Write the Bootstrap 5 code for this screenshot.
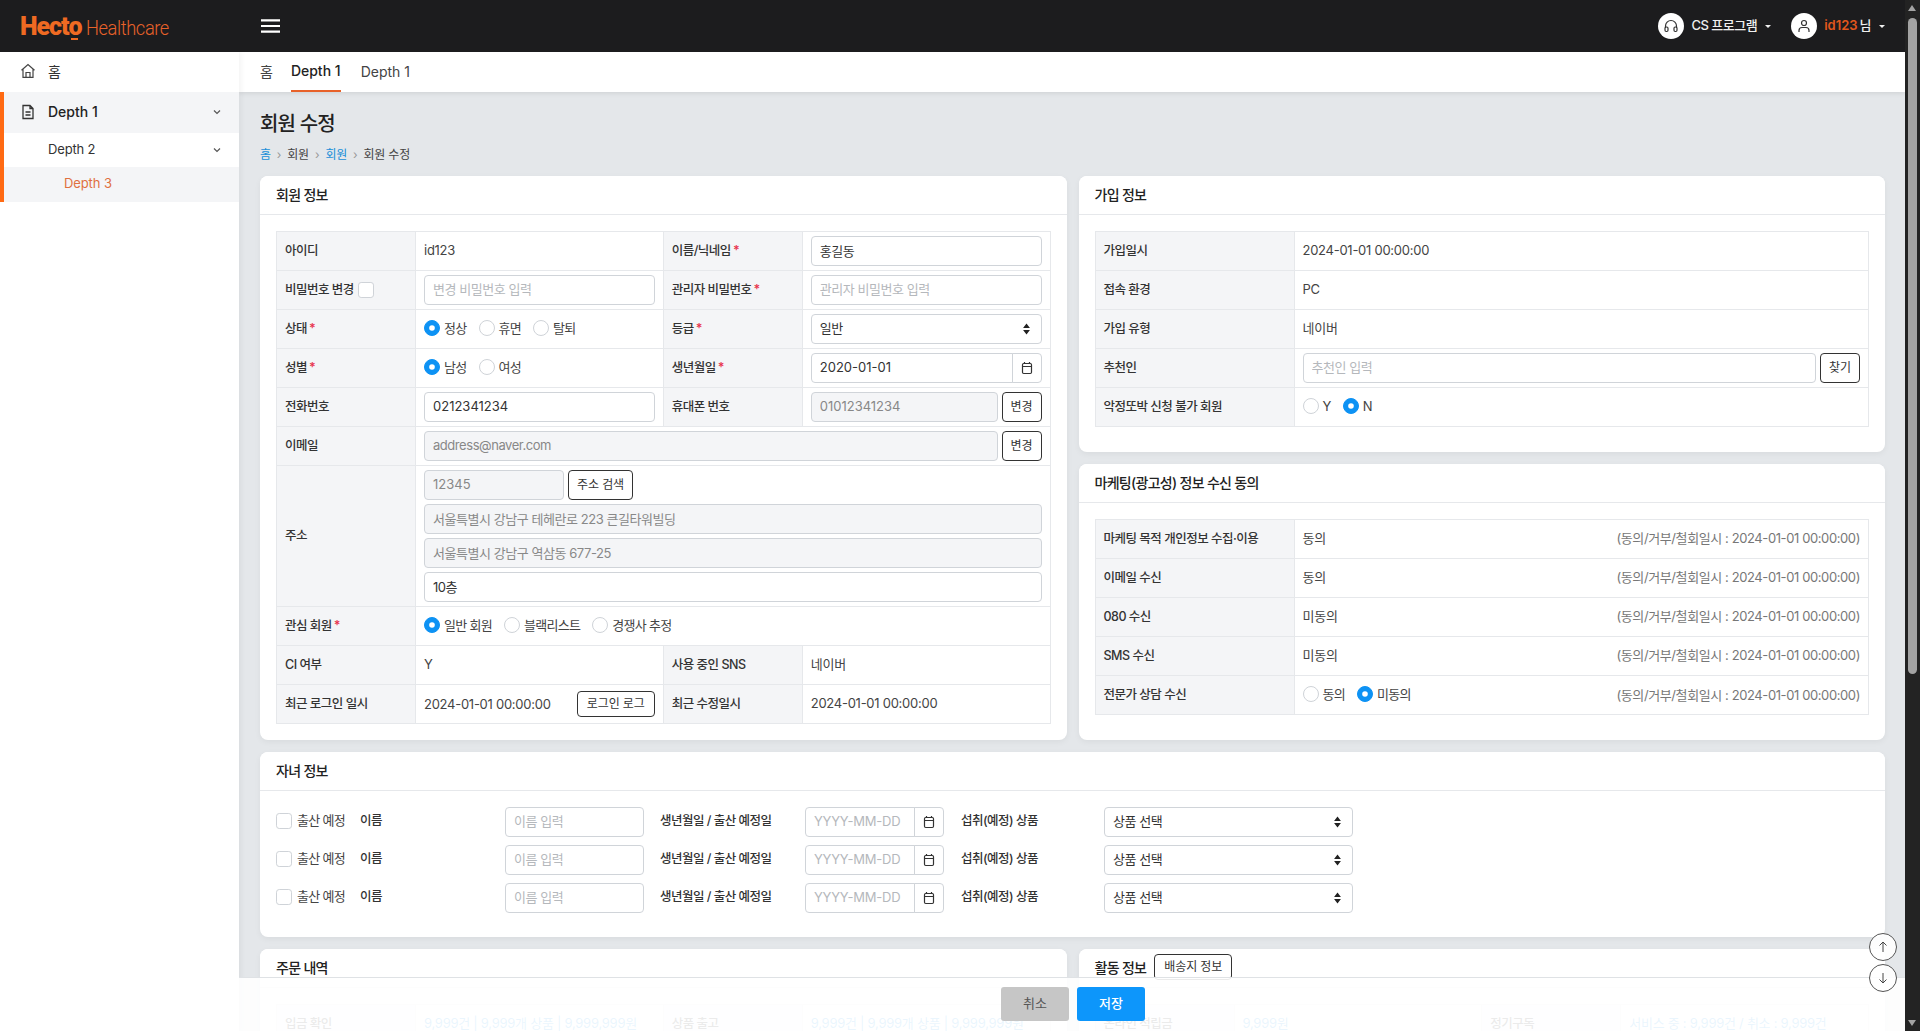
<!doctype html>
<html lang="ko">
<head>
<meta charset="utf-8">
<title>회원 수정</title>
<link rel="stylesheet" href="https://cdn.jsdelivr.net/npm/bootstrap@5.3.0/dist/css/bootstrap.min.css">
<style>
:root{--orange:#ff6a13;--txt:#333;--line:#e6e8eb;--thbg:#f4f5f7;--blue:#0d92f4}
html,body{height:100%;overflow:hidden}
body{font-family:Inter,"Noto Sans CJK KR",sans-serif;font-size:13px;color:var(--txt);background:#e4e7ea}
.app-shell{height:1031px}
.app-main{min-width:0;flex:1 1 auto}
.fake-scroll{width:15px;background:#232323;position:relative;flex:none;padding:18px 3px 0}
.fake-thumb{height:656px;background:#a3a3a3;border-radius:5px}
.fake-scroll::before,.fake-scroll::after{content:"";position:absolute;left:3px;border-left:4.5px solid transparent;border-right:4.5px solid transparent}
.fake-scroll::before{top:5px;border-bottom:6px solid #a3a3a3}
.fake-scroll::after{bottom:5px;border-top:6px solid #a3a3a3}
.top-bar{height:52px;background:#1c1c1e;flex:none;padding:0 20px 0 20px}
.brand-box{width:241px;color:#e8622a;font-family:Roboto,sans-serif;line-height:1;white-space:nowrap}
.brand-a{font-weight:900;font-size:25px;letter-spacing:-1.1px;color:#ef6a22}
.brand-o{position:relative;display:inline-block}
.brand-o::after{content:"";position:absolute;left:3px;right:3px;bottom:-1px;height:2px;background:#ef6a22}
.brand-b{display:inline-block;font-weight:300;font-size:21px;letter-spacing:-.45px;margin-left:5px;transform:scaleX(.87);transform-origin:left center}
.burger{width:19px;height:14px;display:block}
.user-chip{color:#f0f0f0;font-size:13px;font-weight:500;text-decoration:none;letter-spacing:-.5px}
.user-chip:hover{color:#f0f0f0}
.chip-ava{width:26px;height:26px;border-radius:50%;background:#fff;display:flex;align-items:center;justify-content:center;margin-right:7px}
.user-chip.dropdown-toggle::after{margin-left:8px;vertical-align:.15em;border-top-width:.28em;border-left-width:.28em;border-right-width:.28em}
.chip-id{color:#e2571c;font-weight:600;margin-right:2px;letter-spacing:0}
.chip-gap{gap:20px}
.side-bar{width:239px;flex:none;background:#fff;box-shadow:2px 0 6px rgba(0,0,0,.05);z-index:3}
.side-item{display:flex;align-items:center;padding:0 17px 2px 20px;color:#333;text-decoration:none;font-size:14px}
.side-item svg.lead-ico{margin-right:12px;flex:none}
.side-home{height:40px}
.side-d1{height:41px;background:var(--thbg);color:#222;font-weight:500}
.side-d2{height:34px;font-size:13px;letter-spacing:-.15px}
.side-d3{height:35px;background:var(--thbg);color:#e0703f;font-size:13px;letter-spacing:-.1px}
.side-group{border-left:4px solid var(--orange)}
.side-group .side-d1{padding-left:44px;position:relative}
.side-group .side-d1 svg.lead-ico{position:absolute;left:16px}
.side-group .side-d2{padding:0 17px 0 44px}
.side-group .side-d3{padding:0 17px 1px 60px}
.tab-strip{height:40px;background:#fff;box-shadow:0 1px 5px rgba(0,0,0,.1);padding-left:21px;gap:18px;z-index:2;flex:none}
.tab-link{height:40px;display:flex;align-items:center;color:#444;font-size:14px;text-decoration:none;padding-bottom:1px}
.tab-on{color:#222;font-weight:500;border-bottom:2px solid #e8622a;padding-bottom:2px}
.tab-strip .tab-second{margin-left:2px}
.work-area{position:relative;overflow:hidden;flex:1 1 auto;min-height:0}
.work-inner{padding:20px 20px 20px 21px}
.page-ttl{font-size:20px;font-weight:500;line-height:24px;margin:0;color:#222;letter-spacing:-.8px}
.crumbs{--bs-breadcrumb-margin-bottom:11px;--bs-breadcrumb-item-padding-x:6px;--bs-breadcrumb-divider-color:#999;--bs-breadcrumb-divider:'›';margin-top:9px;font-size:12px;line-height:20px;height:20px;letter-spacing:-.2px}
.crumbs a{color:#1a8fd8;text-decoration:none}
.crumbs .breadcrumb-item.active{color:#444}
.tight-row{--bs-gutter-x:12px;--bs-gutter-y:12px}
.col-gap{gap:12px}
.panel{border:0;border-radius:8px;box-shadow:0 2px 6px rgba(0,0,0,.05);--bs-card-bg:#fff}
.panel .card-header{height:39px;padding:0 16px 2px;background:#fff;border-bottom:1px solid var(--line);font-size:14px;font-weight:500;color:#222;display:flex;align-items:center;gap:8px;border-radius:8px 8px 0 0;letter-spacing:-.7px}
.panel .card-body{padding:16px}
.info-tbl{table-layout:fixed;margin:0;--bs-table-border-color:var(--line);font-size:13px;color:var(--txt)}
.info-tbl th,.info-tbl td{padding:4px 8px;vertical-align:middle;height:39px;line-height:20px}
.info-tbl td:not(:has(input,select,button)){padding-top:3px;padding-bottom:5px}
.info-tbl th{background:var(--thbg);font-weight:500;color:#333;white-space:nowrap;font-size:12.5px;letter-spacing:-.5px}
.info-tbl td{font-weight:400;color:#444;letter-spacing:-.26px}
.info-tbl.tbl-gap{margin-bottom:9px}
.th-wide{width:199px}
.th-std{width:139px}
.req{color:#e8344e;font-weight:600;margin-left:2px}
.info-tbl .form-control,.info-tbl .form-select,.kid-grid .form-control,.kid-grid .form-select{height:30px;font-size:13px;padding:0 8px 2px;border-color:#d0d4d9;border-radius:4px;color:#333;line-height:26px;letter-spacing:-.45px}
.info-tbl .form-control.num{letter-spacing:0}
.kid-grid .form-control.num{letter-spacing:-.2px}
.form-control::placeholder{color:#b5b8bc}
.form-control:disabled{background:var(--thbg);color:#888;opacity:1}
.form-select{padding-right:24px!important;background-image:url("data:image/svg+xml,%3Csvg xmlns='http://www.w3.org/2000/svg' viewBox='0 0 10 14'%3E%3Cpath fill='%23222' d='M5 .5l4 5.200H1zM5 13.500L1 8.300h8z'/%3E%3C/svg%3E");background-size:9px 12px;background-position:right 10px center}
.input-group-text{background:#fff;border-color:#d0d4d9;width:30px;padding:0;justify-content:center;height:30px;border-radius:0 4px 4px 0}
.cell-btn{height:30px;padding:0 8px;font-size:12px;border:1px solid #333;background:#fff;color:#333;border-radius:4px;white-space:nowrap;flex:none;line-height:26px;letter-spacing:-.1px}
.cell-btn.mini{height:26px;line-height:22px;padding:0 9px}
.pick{display:flex;align-items:center;gap:4px;margin:0;letter-spacing:-.7px}
.pick .form-check-input{width:16px;height:16px;margin:0;border-color:#cfd3d8;flex:none}
.th-box{width:16px;height:16px;margin:0;flex:none;border-color:#cfd3d8}
.form-check-input:checked{background-color:var(--blue);border-color:var(--blue)}
.form-check-input[type=radio]:checked{background-image:url("data:image/svg+xml,%3Csvg xmlns='http://www.w3.org/2000/svg' viewBox='-4 -4 8 8'%3E%3Ccircle r='1.600' fill='%23fff'/%3E%3C/svg%3E")}
.pick-row{gap:12px;margin-top:-2px}
.addr-stack{gap:4px}
.zip-box{width:140px;flex:none}
.kid-grid{display:grid;grid-template-columns:84px 145px 139px 161px 139px 160px 249px;row-gap:8px;align-items:center;width:1077px;padding-bottom:8px}
.kid-grid .pick{gap:5px;white-space:nowrap;color:#444;margin-top:-2px}
.kid-lbl{font-weight:500;color:#333;font-size:12.5px;letter-spacing:-.5px;margin-top:-2px}
.pad-l{padding-left:16px}
.pad-l2{padding-left:17px}
.blue-val{color:#2e9be6!important}
.stamp{color:#777;letter-spacing:-.4px}
.save-bar{position:absolute;left:0;right:0;bottom:0;height:54px;background:rgba(255,255,255,.9);border-top:1px solid #dfe2e5;gap:8px;z-index:4;padding:9px 0 0 2px}
.btn-off,.btn-go{width:68px;height:34px;border:0;border-radius:3px;font-size:13px;padding:0}
.btn-off{background:#c6c6c6;color:#555}
.btn-go{background:#0d96fb;color:#fff;font-weight:500}
.jump-set{position:absolute;right:8px;bottom:39px;gap:3px;z-index:5}
.jump-btn{width:28px;height:28px;border-radius:50%;border:1px solid #555;background:rgba(255,255,255,.9);display:flex;align-items:center;justify-content:center;padding:0}
</style>
</head>
<body>
<div class="app-shell d-flex">
  <div class="app-main d-flex flex-column">
    <header class="top-bar d-flex align-items-center">
      <div class="brand-box"><span class="brand-a">Hect<span class="brand-o">o</span></span><span class="brand-b">Healthcare</span></div>
      <svg class="burger" viewBox="0 0 19 14"><path d="M0 1.300h19M0 7h19M0 12.700h19" stroke="#fff" stroke-width="2.200"/></svg>
      <div class="ms-auto d-flex align-items-center chip-gap">
        <a class="user-chip dropdown-toggle d-flex align-items-center" href="#"><span class="chip-ava"><svg width="16" height="16" viewBox="0 0 16 16" fill="none" stroke="#333" stroke-width="1.200"><path d="M2.500 10V8a5.500 5.500 0 0 1 11 0v2"/><rect x="2" y="9" width="3" height="4.500" rx="1.200"/><rect x="11" y="9" width="3" height="4.500" rx="1.200"/></svg></span>CS 프로그램</a>
        <a class="user-chip dropdown-toggle d-flex align-items-center" href="#"><span class="chip-ava"><svg width="16" height="16" viewBox="0 0 16 16" fill="none" stroke="#333" stroke-width="1.200"><circle cx="8" cy="5" r="2.500"/><path d="M3 14v-1.500a3 3 0 0 1 3-3h4a3 3 0 0 1 3 3V14"/></svg></span><span class="chip-id">id123</span>님</a>
      </div>
    </header>
    <div class="d-flex flex-grow-1 overflow-hidden">
      <aside class="side-bar">
        <a class="side-item side-home" href="#"><svg class="lead-ico" width="16" height="16" viewBox="0 0 16 16" fill="none" stroke="#444" stroke-width="1.200"><path d="M1.500 7.200 8 1.500l6.500 5.700M3 6v8.300h10V6"/><path d="M6 14.300V9.500h4v4.800"/></svg>홈</a>
        <div class="side-group">
          <a class="side-item side-d1" href="#"><svg class="lead-ico" width="16" height="16" viewBox="0 0 16 16" fill="none" stroke="#333" stroke-width="1.300"><path d="M3 1.500h7l3 3v10H3zM10 1.500v3h3M5.500 8h5M5.500 11h5"/></svg>Depth 1<svg class="ms-auto" width="10" height="10" viewBox="0 0 10 10" fill="none" stroke="#555" stroke-width="1.200"><path d="M2 3.500 5 6.500 8 3.500"/></svg></a>
          <a class="side-item side-d2" href="#">Depth 2<svg class="ms-auto" width="10" height="10" viewBox="0 0 10 10" fill="none" stroke="#555" stroke-width="1.200"><path d="M2 3.500 5 6.500 8 3.500"/></svg></a>
          <a class="side-item side-d3" href="#">Depth 3</a>
        </div>
      </aside>
      <div class="d-flex flex-column flex-grow-1 overflow-hidden position-relative">
        <nav class="tab-strip d-flex">
          <a class="tab-link" href="#">홈</a>
          <a class="tab-link tab-on" href="#">Depth 1</a>
          <a class="tab-link tab-second" href="#">Depth 1</a>
        </nav>
        <main class="work-area">
          <div class="work-inner">
            <h1 class="page-ttl">회원 수정</h1>
            <ol class="breadcrumb crumbs">
              <li class="breadcrumb-item"><a href="#">홈</a></li>
              <li class="breadcrumb-item active">회원</li>
              <li class="breadcrumb-item"><a href="#">회원</a></li>
              <li class="breadcrumb-item active">회원 수정</li>
            </ol>
            <div class="row tight-row">
              <div class="col-6 d-flex">
                <section class="card panel w-100">
                  <div class="card-header">회원 정보</div>
                  <div class="card-body">
                    <table class="table table-bordered info-tbl">
                      <colgroup><col class="th-std"><col><col class="th-std"><col></colgroup>
                      <tbody>
                      <tr><th>아이디</th><td>id123</td><th>이름/닉네임<span class="req">*</span></th><td><input class="form-control" value="홍길동"></td></tr>
                      <tr><th><span class="d-flex align-items-center gap-1">비밀번호 변경<input class="form-check-input th-box" type="checkbox"></span></th><td><input class="form-control" placeholder="변경 비밀번호 입력"></td><th>관리자 비밀번호<span class="req">*</span></th><td><input class="form-control" placeholder="관리자 비밀번호 입력"></td></tr>
                      <tr><th>상태<span class="req">*</span></th><td><div class="d-flex pick-row"><label class="pick"><input class="form-check-input" type="radio" name="st" checked>정상</label><label class="pick"><input class="form-check-input" type="radio" name="st">휴면</label><label class="pick"><input class="form-check-input" type="radio" name="st">탈퇴</label></div></td><th>등급<span class="req">*</span></th><td><select class="form-select"><option>일반</option></select></td></tr>
                      <tr><th>성별<span class="req">*</span></th><td><div class="d-flex pick-row"><label class="pick"><input class="form-check-input" type="radio" name="sx" checked>남성</label><label class="pick"><input class="form-check-input" type="radio" name="sx">여성</label></div></td><th>생년월일<span class="req">*</span></th><td><div class="input-group"><input class="form-control num" value="2020-01-01"><span class="input-group-text"><svg width="14" height="14" viewBox="0 0 14 14" fill="none" stroke="#333" stroke-width="1.200"><rect x="2.500" y="2.500" width="9" height="10" rx="1.200"/><path d="M2.500 5.500h9M4.500 1v2M9.500 1v2"/></svg></span></div></td></tr>
                      <tr><th>전화번호</th><td><input class="form-control num" value="0212341234"></td><th>휴대폰 번호</th><td><div class="d-flex gap-1"><input class="form-control num" disabled value="01012341234"><button class="cell-btn" type="button">변경</button></div></td></tr>
                      <tr><th>이메일</th><td colspan="3"><div class="d-flex gap-1"><input class="form-control" disabled value="address@naver.com"><button class="cell-btn" type="button">변경</button></div></td></tr>
                      <tr><th>주소</th><td colspan="3"><div class="d-flex flex-column addr-stack"><div class="d-flex gap-1"><input class="form-control num zip-box" disabled value="12345"><button class="cell-btn" type="button">주소 검색</button></div><input class="form-control" disabled value="서울특별시 강남구 테헤란로 223 큰길타워빌딩"><input class="form-control" disabled value="서울특별시 강남구 역삼동 677-25"><input class="form-control" value="10층"></div></td></tr>
                      <tr><th>관심 회원<span class="req">*</span></th><td colspan="3"><div class="d-flex pick-row"><label class="pick"><input class="form-check-input" type="radio" name="cm" checked>일반 회원</label><label class="pick"><input class="form-check-input" type="radio" name="cm">블랙리스트</label><label class="pick"><input class="form-check-input" type="radio" name="cm">경쟁사 추정</label></div></td></tr>
                      <tr><th>CI 여부</th><td>Y</td><th>사용 중인 SNS</th><td>네이버</td></tr>
                      <tr><th>최근 로그인 일시</th><td><div class="d-flex align-items-center justify-content-between">2024-01-01 00:00:00<button class="cell-btn mini" type="button">로그인 로그</button></div></td><th>최근 수정일시</th><td>2024-01-01 00:00:00</td></tr>
                      </tbody>
                    </table>
                  </div>
                </section>
              </div>
              <div class="col-6 d-flex flex-column col-gap">
                <section class="card panel">
                  <div class="card-header">가입 정보</div>
                  <div class="card-body">
                    <table class="table table-bordered info-tbl tbl-gap">
                      <colgroup><col class="th-wide"><col></colgroup>
                      <tbody>
                      <tr><th>가입일시</th><td>2024-01-01 00:00:00</td></tr>
                      <tr><th>접속 환경</th><td>PC</td></tr>
                      <tr><th>가입 유형</th><td>네이버</td></tr>
                      <tr><th>추천인</th><td><div class="d-flex gap-1"><input class="form-control" placeholder="추천인 입력"><button class="cell-btn" type="button">찾기</button></div></td></tr>
                      <tr><th>악정또박 신청 불가 회원</th><td><div class="d-flex pick-row"><label class="pick"><input class="form-check-input" type="radio" name="ag">Y</label><label class="pick"><input class="form-check-input" type="radio" name="ag" checked>N</label></div></td></tr>
                      </tbody>
                    </table>
                  </div>
                </section>
                <section class="card panel">
                  <div class="card-header">마케팅(광고성) 정보 수신 동의</div>
                  <div class="card-body">
                    <table class="table table-bordered info-tbl tbl-gap">
                      <colgroup><col class="th-wide"><col></colgroup>
                      <tbody>
                      <tr><th>마케팅 목적 개인정보 수집·이용</th><td><div class="d-flex justify-content-between">동의<span class="stamp">(동의/거부/철회일시 : 2024-01-01 00:00:00)</span></div></td></tr>
                      <tr><th>이메일 수신</th><td><div class="d-flex justify-content-between">동의<span class="stamp">(동의/거부/철회일시 : 2024-01-01 00:00:00)</span></div></td></tr>
                      <tr><th>080 수신</th><td><div class="d-flex justify-content-between">미동의<span class="stamp">(동의/거부/철회일시 : 2024-01-01 00:00:00)</span></div></td></tr>
                      <tr><th>SMS 수신</th><td><div class="d-flex justify-content-between">미동의<span class="stamp">(동의/거부/철회일시 : 2024-01-01 00:00:00)</span></div></td></tr>
                      <tr><th>전문가 상담 수신</th><td><div class="d-flex justify-content-between align-items-center"><div class="d-flex pick-row"><label class="pick"><input class="form-check-input" type="radio" name="ex">동의</label><label class="pick"><input class="form-check-input" type="radio" name="ex" checked>미동의</label></div><span class="stamp">(동의/거부/철회일시 : 2024-01-01 00:00:00)</span></div></td></tr>
                      </tbody>
                    </table>
                  </div>
                </section>
              </div>
              <div class="col-12">
                <section class="card panel">
                  <div class="card-header">자녀 정보</div>
                  <div class="card-body">
                    <div class="kid-grid">
                      <label class="pick"><input class="form-check-input" type="checkbox">출산 예정</label><span class="kid-lbl">이름</span><input class="form-control" placeholder="이름 입력"><span class="kid-lbl pad-l">생년월일 / 출산 예정일</span><div class="input-group"><input class="form-control num" placeholder="YYYY-MM-DD"><span class="input-group-text"><svg width="14" height="14" viewBox="0 0 14 14" fill="none" stroke="#333" stroke-width="1.200"><rect x="2.500" y="2.500" width="9" height="10" rx="1.200"/><path d="M2.500 5.500h9M4.500 1v2M9.500 1v2"/></svg></span></div><span class="kid-lbl pad-l2">섭취(예정) 상품</span><select class="form-select"><option>상품 선택</option></select>
                      <label class="pick"><input class="form-check-input" type="checkbox">출산 예정</label><span class="kid-lbl">이름</span><input class="form-control" placeholder="이름 입력"><span class="kid-lbl pad-l">생년월일 / 출산 예정일</span><div class="input-group"><input class="form-control num" placeholder="YYYY-MM-DD"><span class="input-group-text"><svg width="14" height="14" viewBox="0 0 14 14" fill="none" stroke="#333" stroke-width="1.200"><rect x="2.500" y="2.500" width="9" height="10" rx="1.200"/><path d="M2.500 5.500h9M4.500 1v2M9.500 1v2"/></svg></span></div><span class="kid-lbl pad-l2">섭취(예정) 상품</span><select class="form-select"><option>상품 선택</option></select>
                      <label class="pick"><input class="form-check-input" type="checkbox">출산 예정</label><span class="kid-lbl">이름</span><input class="form-control" placeholder="이름 입력"><span class="kid-lbl pad-l">생년월일 / 출산 예정일</span><div class="input-group"><input class="form-control num" placeholder="YYYY-MM-DD"><span class="input-group-text"><svg width="14" height="14" viewBox="0 0 14 14" fill="none" stroke="#333" stroke-width="1.200"><rect x="2.500" y="2.500" width="9" height="10" rx="1.200"/><path d="M2.500 5.500h9M4.500 1v2M9.500 1v2"/></svg></span></div><span class="kid-lbl pad-l2">섭취(예정) 상품</span><select class="form-select"><option>상품 선택</option></select>
                    </div>
                  </div>
                </section>
              </div>
              <div class="col-6">
                <section class="card panel">
                  <div class="card-header">주문 내역</div>
                  <div class="card-body">
                    <table class="table table-bordered info-tbl">
                      <colgroup><col class="th-std"><col><col class="th-std"><col></colgroup>
                      <tbody><tr><th>입금 확인</th><td class="blue-val">9,999건 | 9,999개 상품 | 9,999,999원</td><th>상품 출고</th><td class="blue-val">9,999건 | 9,999개 상품 | 9,999,999원</td></tr></tbody>
                    </table>
                  </div>
                </section>
              </div>
              <div class="col-6">
                <section class="card panel">
                  <div class="card-header">활동 정보<button class="cell-btn mini" type="button">배송지 정보</button></div>
                  <div class="card-body">
                    <table class="table table-bordered info-tbl">
                      <colgroup><col class="th-std"><col><col class="th-std"><col></colgroup>
                      <tbody><tr><th>온라인 적립금</th><td class="blue-val">9,999원</td><th>정기구독</th><td class="blue-val">서비스 중 : 9,999건 / 취소 : 9,999건</td></tr></tbody>
                    </table>
                  </div>
                </section>
              </div>
            </div>
          </div>
          <div class="save-bar d-flex justify-content-center">
            <button class="btn-off" type="button">취소</button>
            <button class="btn-go" type="button">저장</button>
          </div>
          <div class="jump-set d-flex flex-column">
            <button class="jump-btn" type="button"><svg width="14" height="14" viewBox="0 0 14 14" fill="none" stroke="#444" stroke-width="1"><path d="M7 12V2M3.500 5.500 7 2l3.500 3.500"/></svg></button>
            <button class="jump-btn" type="button"><svg width="14" height="14" viewBox="0 0 14 14" fill="none" stroke="#444" stroke-width="1"><path d="M7 2v10M3.500 8.500 7 12l3.500-3.500"/></svg></button>
          </div>
        </main>
      </div>
    </div>
  </div>
  <div class="fake-scroll"><div class="fake-thumb"></div></div>
</div>
<script src="https://cdn.jsdelivr.net/npm/bootstrap@5.3.0/dist/js/bootstrap.bundle.min.js"></script>
</body>
</html>
